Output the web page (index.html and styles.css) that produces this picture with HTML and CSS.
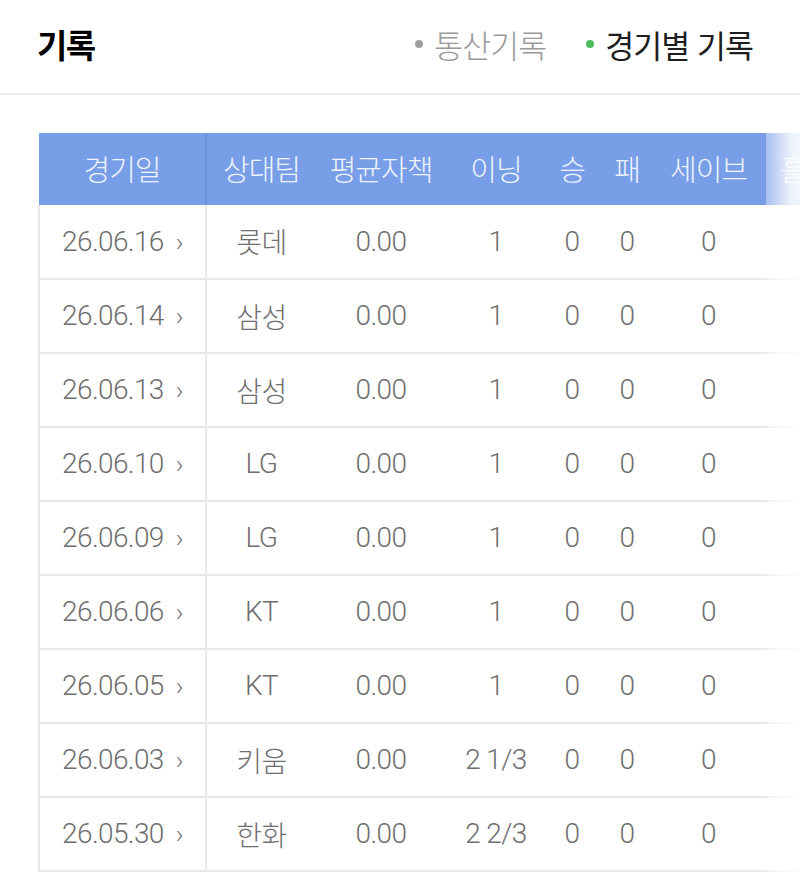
FILE: index.html
```html
<!DOCTYPE html>
<html lang="ko">
<head>
<meta charset="utf-8">
<link rel="stylesheet" href="styles.css">
</head>
<body>
<header class="top">
  <h1 class="title">기록</h1>
  <nav class="tabs">
    <span class="tab"><i class="dot gray"></i>통산기록</span>
    <span class="tab active"><i class="dot green"></i>경기별 기록</span>
  </nav>
</header>
<div class="wrap">
  <div class="scroller">
    <table class="rec">
      <colgroup>
        <col class="c1"><col class="c2"><col class="c3"><col class="c4"><col class="c5"><col class="c6"><col class="c7"><col class="c8">
      </colgroup>
      <thead>
        <tr><th class="first">경기일</th><th>상대팀</th><th>평균자책</th><th>이닝</th><th>승</th><th>패</th><th>세이브</th><th>홀드</th></tr>
      </thead>
      <tbody>
        <tr><td class="first">26.06.16<span class="chev">›</span></td><td>롯데</td><td>0.00</td><td>1</td><td>0</td><td>0</td><td>0</td><td>0</td></tr>
        <tr><td class="first">26.06.14<span class="chev">›</span></td><td>삼성</td><td>0.00</td><td>1</td><td>0</td><td>0</td><td>0</td><td>0</td></tr>
        <tr><td class="first">26.06.13<span class="chev">›</span></td><td>삼성</td><td>0.00</td><td>1</td><td>0</td><td>0</td><td>0</td><td>0</td></tr>
        <tr><td class="first">26.06.10<span class="chev">›</span></td><td>LG</td><td>0.00</td><td>1</td><td>0</td><td>0</td><td>0</td><td>0</td></tr>
        <tr><td class="first">26.06.09<span class="chev">›</span></td><td>LG</td><td>0.00</td><td>1</td><td>0</td><td>0</td><td>0</td><td>0</td></tr>
        <tr><td class="first">26.06.06<span class="chev">›</span></td><td>KT</td><td>0.00</td><td>1</td><td>0</td><td>0</td><td>0</td><td>0</td></tr>
        <tr><td class="first">26.06.05<span class="chev">›</span></td><td>KT</td><td>0.00</td><td>1</td><td>0</td><td>0</td><td>0</td><td>0</td></tr>
        <tr><td class="first">26.06.03<span class="chev">›</span></td><td>키움</td><td>0.00</td><td>2 1/3</td><td>0</td><td>0</td><td>0</td><td>0</td></tr>
        <tr><td class="first">26.05.30<span class="chev">›</span></td><td>한화</td><td>0.00</td><td>2 2/3</td><td>0</td><td>0</td><td>0</td><td>0</td></tr>
      </tbody>
    </table>
  </div>
  <div class="fade"></div>
</div>
</body>
</html>
```
FILE: styles.css
```css
* { box-sizing: border-box; }
html, body { margin: 0; padding: 0; background: #fff; }
body {
  font-family: "Noto Sans CJK KR", "Noto Sans", sans-serif;
  width: 800px;
  height: 873px;
  overflow: hidden;
}
.top {
  height: 95px;
  border-bottom: 2px solid #ededf0;
  display: flex;
  align-items: center;
  justify-content: space-between;
  padding: 0 47px 0 37px;
}
.title {
  margin: 0;
  font-size: 33px;
  font-weight: 700;
  color: #000;
  letter-spacing: -1.5px;
  position: relative;
  top: -3px;
}
.tabs {
  display: flex;
  gap: 40px;
  position: relative;
  top: -3px;
}
.tab {
  display: flex;
  align-items: center;
  font-size: 31.5px;
  font-weight: 300;
  color: #999;
  letter-spacing: -1px;
}
.tab.active { color: #1e1e1e; font-weight: 400; }
.dot {
  display: inline-block;
  width: 8px;
  height: 8px;
  border-radius: 50%;
  margin-right: 11px;
}
.dot.gray { background: #a0a0a0; }
.dot.green { background: #4cbb5a; }
.wrap {
  position: relative;
  margin: 38px 0 0 38px;
  width: 762px;
}
.scroller {
  overflow: hidden;
  width: 762px;
}
.rec {
  border-collapse: collapse;
  table-layout: fixed;
  width: 812px;
}
.c1 { width: 167px; }
.c2 { width: 110px; }
.c3 { width: 130px; }
.c4 { width: 100px; }
.c5 { width: 52px; }
.c6 { width: 58px; }
.c7 { width: 105px; }
.c8 { width: 90px; }
.rec th {
  background: #779ee6;
  color: #eef3fd;
  font-weight: 300;
  font-size: 29px;
  height: 72px;
  padding: 0 0 3px;
  text-align: center;
  white-space: nowrap;
  letter-spacing: -1px;
}
.rec th.first { border-right: 2px solid #6c93dc; }
.rec td {
  height: 74px;
  padding: 0 0 1px;
  text-align: center;
  font-family: Roboto, "Noto Sans CJK KR", sans-serif;
  font-size: 28px;
  font-weight: 300;
  color: #6e6e6e;
  border-bottom: 2px solid #e8e8ec;
  white-space: nowrap;
  letter-spacing: -0.6px;
}
.rec td.first {
  border-left: 2px solid #e8e8ec;
  border-right: 2px solid #e8e8ec;
  padding-left: 0;
}
.chev {
  font-size: 26px;
  margin-left: 12px;
  color: #777;
}
.fade {
  position: absolute;
  top: 0;
  right: 0;
  width: 34px;
  height: 100%;
  background: linear-gradient(to right, rgba(255,255,255,0.35), rgba(255,255,255,0.85) 70%, rgba(255,255,255,0.9));
}
```
